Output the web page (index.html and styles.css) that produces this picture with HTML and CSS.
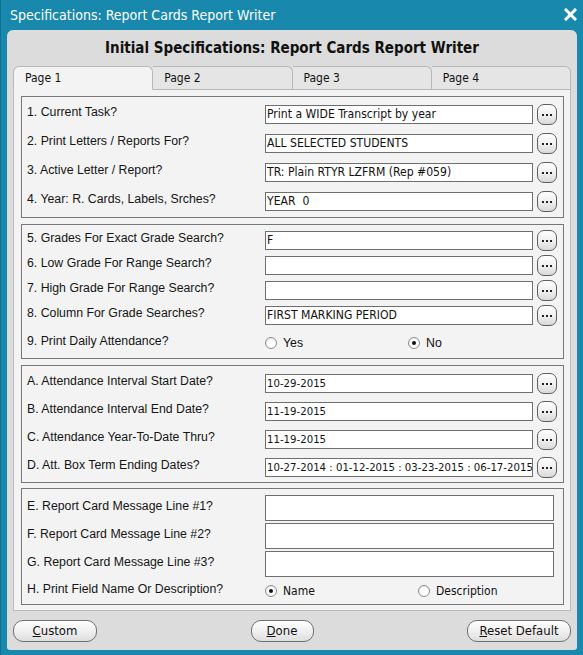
FILE: index.html
```html
<!DOCTYPE html>
<html>
<head>
<meta charset="utf-8">
<link rel="stylesheet" href="styles.css">
</head>
<body>
<div class="window">
  <div class="titlebar">
    <span class="title">Specifications: Report Cards Report Writer</span>
    <svg class="close" width="13" height="13" viewBox="0 0 13 13"><path d="M2 2 L11 11 M11 2 L2 11" stroke="#fff" stroke-width="3" stroke-linecap="square"/></svg>
  </div>
  <div class="panel">
    <div class="heading">Initial Specifications: Report Cards Report Writer</div>
    <div class="tabs">
      <div class="tab active">Page 1</div>
      <div class="tab">Page 2</div>
      <div class="tab">Page 3</div>
      <div class="tab">Page 4</div>
    </div>
    <div class="content">
      <div class="group g1">
        <div class="row"><span class="label">1. Current Task?</span><div class="field">Print a WIDE Transcript by year</div><span class="dots"><svg width="20" height="21" viewBox="0 0 20 21"><rect x="5" y="10" width="2" height="2" fill="#222"/><rect x="9" y="10" width="2" height="2" fill="#222"/><rect x="13" y="10" width="2" height="2" fill="#222"/></svg></span></div>
        <div class="row"><span class="label">2. Print Letters / Reports For?</span><div class="field">ALL SELECTED STUDENTS</div><span class="dots"><svg width="20" height="21" viewBox="0 0 20 21"><rect x="5" y="10" width="2" height="2" fill="#222"/><rect x="9" y="10" width="2" height="2" fill="#222"/><rect x="13" y="10" width="2" height="2" fill="#222"/></svg></span></div>
        <div class="row"><span class="label">3. Active Letter / Report?</span><div class="field">TR: Plain RTYR LZFRM (Rep #059)</div><span class="dots"><svg width="20" height="21" viewBox="0 0 20 21"><rect x="5" y="10" width="2" height="2" fill="#222"/><rect x="9" y="10" width="2" height="2" fill="#222"/><rect x="13" y="10" width="2" height="2" fill="#222"/></svg></span></div>
        <div class="row"><span class="label">4. Year: R. Cards, Labels, Srches?</span><div class="field">YEAR&nbsp;&nbsp;0</div><span class="dots"><svg width="20" height="21" viewBox="0 0 20 21"><rect x="5" y="10" width="2" height="2" fill="#222"/><rect x="9" y="10" width="2" height="2" fill="#222"/><rect x="13" y="10" width="2" height="2" fill="#222"/></svg></span></div>
      </div>
      <div class="group g2">
        <div class="row"><span class="label">5. Grades For Exact Grade Search?</span><div class="field">F</div><span class="dots"><svg width="20" height="21" viewBox="0 0 20 21"><rect x="5" y="10" width="2" height="2" fill="#222"/><rect x="9" y="10" width="2" height="2" fill="#222"/><rect x="13" y="10" width="2" height="2" fill="#222"/></svg></span></div>
        <div class="row"><span class="label">6. Low Grade For Range Search?</span><div class="field"></div><span class="dots"><svg width="20" height="21" viewBox="0 0 20 21"><rect x="5" y="10" width="2" height="2" fill="#222"/><rect x="9" y="10" width="2" height="2" fill="#222"/><rect x="13" y="10" width="2" height="2" fill="#222"/></svg></span></div>
        <div class="row"><span class="label">7. High Grade For Range Search?</span><div class="field"></div><span class="dots"><svg width="20" height="21" viewBox="0 0 20 21"><rect x="5" y="10" width="2" height="2" fill="#222"/><rect x="9" y="10" width="2" height="2" fill="#222"/><rect x="13" y="10" width="2" height="2" fill="#222"/></svg></span></div>
        <div class="row"><span class="label">8. Column For Grade Searches?</span><div class="field">FIRST MARKING PERIOD</div><span class="dots"><svg width="20" height="21" viewBox="0 0 20 21"><rect x="5" y="10" width="2" height="2" fill="#222"/><rect x="9" y="10" width="2" height="2" fill="#222"/><rect x="13" y="10" width="2" height="2" fill="#222"/></svg></span></div>
        <div class="row radio-row"><span class="label">9. Print Daily Attendance?</span>
          <span class="opt opt-first-g2"><span class="radio"></span><span class="opt-text arial">Yes</span></span>
          <span class="opt"><span class="radio checked"></span><span class="opt-text arial">No</span></span>
        </div>
      </div>
      <div class="group g3">
        <div class="row"><span class="label">A. Attendance Interval Start Date?</span><div class="field num">10-29-2015</div><span class="dots"><svg width="20" height="21" viewBox="0 0 20 21"><rect x="5" y="10" width="2" height="2" fill="#222"/><rect x="9" y="10" width="2" height="2" fill="#222"/><rect x="13" y="10" width="2" height="2" fill="#222"/></svg></span></div>
        <div class="row"><span class="label">B. Attendance Interval End Date?</span><div class="field num">11-19-2015</div><span class="dots"><svg width="20" height="21" viewBox="0 0 20 21"><rect x="5" y="10" width="2" height="2" fill="#222"/><rect x="9" y="10" width="2" height="2" fill="#222"/><rect x="13" y="10" width="2" height="2" fill="#222"/></svg></span></div>
        <div class="row"><span class="label">C. Attendance Year-To-Date Thru?</span><div class="field num">11-19-2015</div><span class="dots"><svg width="20" height="21" viewBox="0 0 20 21"><rect x="5" y="10" width="2" height="2" fill="#222"/><rect x="9" y="10" width="2" height="2" fill="#222"/><rect x="13" y="10" width="2" height="2" fill="#222"/></svg></span></div>
        <div class="row"><span class="label">D. Att. Box Term Ending Dates?</span><div class="field num">10-27-2014 : 01-12-2015 : 03-23-2015 : 06-17-2015</div><span class="dots"><svg width="20" height="21" viewBox="0 0 20 21"><rect x="5" y="10" width="2" height="2" fill="#222"/><rect x="9" y="10" width="2" height="2" fill="#222"/><rect x="13" y="10" width="2" height="2" fill="#222"/></svg></span></div>
      </div>
      <div class="group g4">
        <div class="row"><span class="label">E. Report Card Message Line #1?</span><div class="field tall"></div></div>
        <div class="row"><span class="label">F. Report Card Message Line #2?</span><div class="field tall"></div></div>
        <div class="row"><span class="label">G. Report Card Message Line #3?</span><div class="field tall"></div></div>
        <div class="row radio-row"><span class="label">H. Print Field Name Or Description?</span>
          <span class="opt opt-first-g4"><span class="radio checked"></span><span class="opt-text">Name</span></span>
          <span class="opt"><span class="radio"></span><span class="opt-text">Description</span></span>
        </div>
      </div>
    </div>
    <div class="footer">
      <span class="btn btn-custom"><u>C</u>ustom</span>
      <span class="btn btn-done"><u>D</u>one</span>
      <span class="btn btn-reset"><u>R</u>eset Default</span>
    </div>
  </div>
</div>
</body>
</html>
```

FILE: styles.css
```css
* { box-sizing: border-box; }
html, body { margin: 0; padding: 0; }
body {
  background: #1888ad;
  font-family: "Liberation Sans", Arial, sans-serif;
}
.window {
  width: 583px;
  height: 655px;
  background: #1888ad;
  border-left: 1px solid #12708f;
  display: flex;
  flex-direction: column;
}
.titlebar {
  height: 30px;
  display: flex;
  align-items: center;
  justify-content: space-between;
  padding: 0 6px 1px 9px;
}
.title {
  color: #fff;
  font-family: "DejaVu Sans", sans-serif;
  font-stretch: condensed;
  font-size: 14px;
}
.close { display: block; margin-top: -1px; }
.panel {
  height: 620px;
  margin: 0 6px 0 6px;
  background: #dcdcdc;
  border-radius: 6px 6px 3px 3px;
  padding: 0 6px;
  display: flex;
  flex-direction: column;
}
.heading {
  height: 36px;
  line-height: 36px;
  text-align: center;
  font-family: "DejaVu Sans", sans-serif;
  font-stretch: condensed;
  font-weight: bold;
  font-size: 15px;
  color: #111;
}
.tabs {
  height: 24px;
  display: flex;
}
.tab {
  flex: 1;
  border: 1px solid #b8b8b8;
  border-left: none;
  border-radius: 0 6px 0 0;
  background: #e5e5e5;
  font-family: "DejaVu Sans", sans-serif;
  font-stretch: condensed;
  font-size: 12px;
  color: #111;
  padding: 4px 0 0 11px;
}
.tab:first-child { border-left: 1px solid #b8b8b8; border-radius: 6px 6px 0 0; }
.tab.active {
  background: #f3f3f3;
  border-bottom-color: #f3f3f3;
}
.content {
  height: 521px;
  background: #f3f3f3;
  border: 1px solid #bcbcbc;
  border-top: none;
  padding: 6px 6px 0 7px;
  display: flex;
  flex-direction: column;
}
.group {
  border: 1px solid #777;
  padding-left: 5px;
}
.g1 { height: 122px; padding-top: 3px; }
.g2 { height: 135px; padding-top: 3px; margin-top: 6px; }
.g3 { height: 118px; padding-top: 3px; margin-top: 6px; }
.g4 { height: 117px; padding-top: 5px; margin-top: 5px; }
.row {
  display: flex;
  align-items: center;
}
.g1 .row { height: 29px; }
.g2 .row { height: 25px; }
.g2 .radio-row { height: 30px; }
.g3 .row { height: 28px; }
.g4 .row { height: 28px; }
.g4 .radio-row { height: 26px; }
.label {
  width: 238px;
  flex: none;
  font-size: 12.3px;
  color: #151515;
  padding-bottom: 5px;
  white-space: nowrap;
}
.field {
  width: 268px;
  height: 19px;
  flex: none;
  background: #fff;
  border: 1px solid #6e6e6e;
  font-family: "DejaVu Sans", sans-serif;
  font-stretch: condensed;
  font-size: 12.1px;
  line-height: 17px;
  padding-left: 1px;
  color: #111;
  white-space: nowrap;
  overflow: hidden;
}
.field.num { font-size: 11.3px; letter-spacing: 0; }
.field.tall { width: 289px; height: 26px; }
.dots {
  width: 20px;
  height: 21px;
  flex: none;
  margin-left: 4px;
  border: 1px solid #5e5e5e;
  border-radius: 7px;
  background: linear-gradient(#ffffff, #eeeeee 55%, #d9d9d9);
  overflow: hidden;
}
.dots svg { display: block; margin: -1px 0 0 -1px; }
.opt {
  display: flex;
  align-items: center;
  flex: none;
  font-family: "DejaVu Sans", sans-serif;
  font-stretch: condensed;
  font-size: 12px;
  color: #111;
  padding-bottom: 1px;
}
.opt-text.arial { font-family: "Liberation Sans", Arial, sans-serif; font-size: 12.3px; }
.opt-first-g2 { width: 143px; }
.opt-first-g4 { width: 153px; }
.radio {
  width: 12px;
  height: 12px;
  border-radius: 50%;
  border: 1px solid #8c8c8c;
  background: radial-gradient(circle at 60% 60%, #ffffff 40%, #e2e2e2);
  margin-right: 6px;
  display: flex;
  align-items: center;
  justify-content: center;
}
.radio.checked::after {
  content: "";
  width: 4px;
  height: 4px;
  border-radius: 50%;
  background: #111;
}
.footer {
  height: 39px;
  display: flex;
  justify-content: space-between;
  align-items: flex-start;
  padding-top: 9px;
}
.btn {
  height: 22px;
  border: 1px solid #707070;
  border-radius: 10px;
  background: linear-gradient(#fefefe, #f0f0f0 50%, #dedede);
  font-family: "DejaVu Sans", sans-serif;
  font-stretch: condensed;
  font-size: 13px;
  line-height: 20px;
  color: #111;
  text-align: center;
}
.btn-custom { width: 84px; }
.btn-done { width: 63px; }
.btn-reset { width: 104px; }
```
